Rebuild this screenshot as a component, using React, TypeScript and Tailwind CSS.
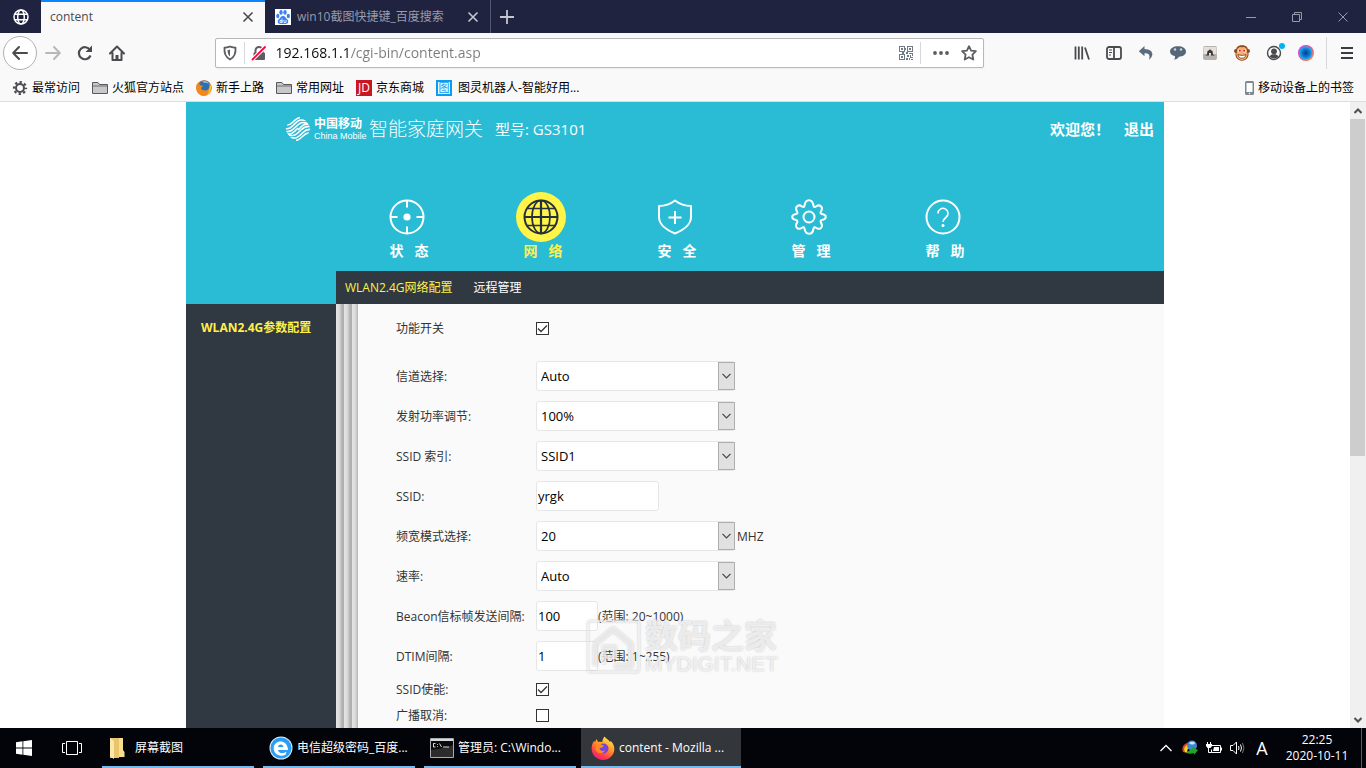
import type { ReactNode } from 'react';
import { useState } from 'react';

// Main sections of the gateway admin page
const mainNavigation = [
  { name: '状   态', icon: TargetIcon, active: false },
  { name: '网   络', icon: GlobeIcon, active: true },
  { name: '安   全', icon: ShieldIcon, active: false },
  { name: '管   理', icon: GearIcon, active: false },
  { name: '帮   助', icon: HelpIcon, active: false },
];

const bookmarks = [
  { name: '最常访问', icon: CogIcon },
  { name: '火狐官方站点', icon: FolderIcon },
  { name: '新手上路', icon: OldFirefoxIcon },
  { name: '常用网址', icon: FolderIcon },
  { name: '京东商城', icon: JdIcon },
  { name: '图灵机器人-智能好用...', icon: TuringIcon },
];

const extensions = [
  { name: '我的足迹', icon: LibraryIcon },
  { name: '侧栏', icon: SidebarIcon },
  { name: '撤销', icon: UndoIcon },
  { name: '聊天', icon: ChatIcon },
  { name: '图片', icon: PictureIcon },
  { name: '脚本', icon: MonkeyIcon },
  { name: '账户', icon: AccountIcon },
  { name: '扩展', icon: LensIcon },
];

const tasks = [
  { name: '屏幕截图', icon: ExplorerIcon, active: false },
  { name: '电信超级密码_百度...', icon: EdgeLikeIcon, active: false },
  { name: '管理员: C:\\Windo...', icon: ConsoleIcon, active: false },
  { name: 'content - Mozilla ...', icon: FirefoxIcon, active: true },
];

/* ---------- page icons ---------- */

function TargetIcon() {
  return (
    <svg viewBox="0 0 36 36" className="size-9" fill="none" stroke="currentColor" strokeWidth="2">
      <circle cx="18" cy="18" r="16.5" />
      <circle cx="18" cy="18" r="3.6" fill="currentColor" stroke="none" />
      <path d="M18 1.500v7M18 27.500v7M1.500 18h7M27.500 18h7" />
    </svg>
  );
}

function GlobeIcon() {
  return (
    <svg viewBox="0 0 36 36" className="size-9" fill="none" stroke="currentColor" strokeWidth="2">
      <circle cx="18" cy="18" r="16.500" />
      <ellipse cx="18" cy="18" rx="9" ry="16.500" strokeWidth="1.700" />
      <path d="M18 1.500v33M1.500 18h33" strokeWidth="2.200" />
      <path d="M4.500 9.500h27M4.500 26.500h27" strokeWidth="1.400" />
    </svg>
  );
}

function ShieldIcon() {
  return (
    <svg viewBox="0 0 36 36" className="size-9" fill="none" stroke="currentColor" strokeWidth="2" strokeLinejoin="round">
      <path d="M18 1.500C13.500 5 7.500 7 2 7v11c0 7 7 13 16 16.500C27 31 34 25 34 18V7C28.500 7 22.500 5 18 1.500Z" />
      <path d="M18 12v13M11.500 18.500h13" />
    </svg>
  );
}

function GearIcon() {
  return (
    <svg viewBox="0 0 36 36" className="size-9" fill="none" stroke="currentColor" strokeWidth="2" strokeLinejoin="round">
      <circle cx="18" cy="18" r="5.500" />
      <path d="M13.500 6.500C14 3.500 15.500 1.200 18 1.200s4 2.300 4.500 5.300c.3 1.600 1.200 2 2.500 1 2-1.500 3.700-1.300 4.900-.2s1.500 3 .2 5c-1 1.500-.6 2.500 1 2.800 2.200.5 3.700 1.400 3.700 3s-1.500 2.500-3.700 3c-1.600.3-2 1.300-1 2.800 1.300 2 1 3.900-.2 5s-2.900 1.300-4.900-.2c-1.300-1-2.200-.6-2.500 1-.5 3-2 5.100-4.500 5.100s-4-2.100-4.500-5.100c-.3-1.600-1.200-2-2.500-1-2 1.500-3.700 1.300-4.900.2s-1.500-3-.2-5c1-1.500.6-2.500-1-2.800-2.200-.5-3.700-1.400-3.700-3s1.500-2.500 3.700-3c1.600-.3 2-1.300 1-2.800-1.300-2-1-3.900.2-5s2.900-1.300 4.900.2c1.300 1 2.200.6 2.500-1Z" />
    </svg>
  );
}

function HelpIcon() {
  return (
    <svg viewBox="0 0 36 36" className="size-9" fill="none" stroke="currentColor" strokeWidth="2">
      <circle cx="18" cy="18" r="16.500" />
      <path d="M13 14.500a5 5 0 1 1 7.800 4C18.800 20 18 21 18 23" strokeWidth="1.600" />
      <circle cx="18" cy="26.500" r="1.500" fill="currentColor" stroke="none" />
    </svg>
  );
}

function ChinaMobileLogo() {
  return (
    <svg viewBox="0 0 26 26" className="size-[26px]" fill="none" stroke="#fff" strokeWidth="1.700">
      <clipPath id="cm-shape">
        <path d="M9.500 1.500Q13 0 16.500 1.500L21 5l3.500 5q1.500 3 0 6L21 21l-4.500 3.500q-3.500 1.500-7 0L5 21l-3.500-5Q0 13 1.500 10L5 5Z" />
      </clipPath>
      <g clipPath="url(#cm-shape)">
        <path d="M2 9c3 0 4-1 6-3s4-4 7-4.500" />
        <path d="M0 12.500c4 1 6-1 8.500-3.500S13 4 16 4s3 .5 5 .500" />
        <path d="M0 15.500c5 1 7.500-1.500 10-4S15 6.500 18 6.500s4 1 6 1" />
        <path d="M1.500 17.500c3 1.500 6 0 8.500-2.500l3-3" />
        <path d="M13 14l3-3c2.500-2.500 5.500-4 8.500-2.500" />
        <path d="M2 18.500c2 1 3.500 1 6 1s5.500-3 8-5.500 5-4.500 10-3.500" />
        <path d="M5 21.500c2 .5 3 .5 5 .5s5.500-3 8-5.500 4-3.500 8-3" />
        <path d="M11 24.500c3-.5 5-2.500 7-4.500s3-3 6-3" />
      </g>
    </svg>
  );
}

/* ---------- browser icons ---------- */

function NetIcon() {
  return (
    <svg viewBox="0 0 16 16" className="size-4" fill="none" stroke="#fff" strokeWidth="1.500">
      <circle cx="8" cy="8" r="7" />
      <ellipse cx="8" cy="8" rx="3.300" ry="7" />
      <path d="M2 5.200h12M2 10.800h12" />
    </svg>
  );
}

function BaiduIcon() {
  return (
    <svg viewBox="0 0 16 16" className="size-4">
      <path d="M0 0h16v16H0z" fill="#fff" />
      <g fill="#3b82f0">
        <ellipse cx="2.800" cy="7" rx="1.600" ry="2.200" />
        <ellipse cx="6" cy="3.400" rx="1.700" ry="2.300" />
        <ellipse cx="10" cy="3.400" rx="1.700" ry="2.300" />
        <ellipse cx="13.300" cy="7" rx="1.600" ry="2.200" />
        <path d="M8 6.800c-2 0-2.600 2.300-4.200 3.500-2 1.600-1 5 1.700 4.700h5c2.700.3 3.800-3 1.700-4.700C10.600 9.100 10 6.800 8 6.800Z" />
      </g>
      <path d="M5 11.500h2v2H5zM7 9.500v4M9 11v2.500h2V11" fill="none" stroke="#fff" strokeWidth=".8" />
    </svg>
  );
}

function CloseIcon() {
  return (
    <svg viewBox="0 0 12 12" className="size-3" fill="none" stroke="currentColor" strokeWidth="1.600">
      <path d="m1.500 1.500 9 9M10.500 1.500l-9 9" />
    </svg>
  );
}

function CogIcon() {
  return (
    <svg viewBox="0 0 16 16" className="size-4" fill="none" stroke="#4a4a4f">
      <circle cx="8" cy="8" r="4" strokeWidth="2" />
      <circle cx="8" cy="8" r="6" strokeWidth="2.200" strokeDasharray="2.300 2.412" strokeDashoffset="1.150" />
    </svg>
  );
}

function FolderIcon() {
  return (
    <svg viewBox="0 0 16 16" className="size-4" fill="#c8c8cc" stroke="#58585c">
      <path d="M.5 13.500v-11h5.500l1.500 2h8v9Z" />
      <path d="M.5 6h15" strokeWidth=".8" />
    </svg>
  );
}

function OldFirefoxIcon() {
  return (
    <svg viewBox="0 0 16 16" className="size-4">
      <circle cx="8" cy="8" r="7.800" fill="#e66a12" />
      <circle cx="8.500" cy="6" r="5.500" fill="#2b6fb5" />
      <path d="M6 1.500c3-1.500 6 0 7 2.500-2-1.500-4 0-7-2.500Z" fill="#79c2ee" />
      <path d="M.8 4 3 2.500 3.500 5 7 6 5 8l1 2 4 .5c1.500 0 3-1.500 4-5 3 4 0 10-6 10.300C2.500 15.800-1 10 .8 4Z" fill="#f08a1c" />
      <path d="M13.500 3.500c3 4 1.500 9.500-2.500 11.500 2-3 3-7 2.500-11.500Z" fill="#fcc52e" />
    </svg>
  );
}

function JdIcon() {
  return (
    <span className="flex size-4 items-center justify-center bg-[#c81623] font-['Open_Sans',sans-serif] text-xs leading-4 text-white">
      JD
    </span>
  );
}

function TuringIcon() {
  return (
    <span className="mr-0.5 flex size-4 items-center justify-center border-2 border-[#0d9cf0] bg-[#e8f6ff] text-[11px] leading-3 text-[#0d9cf0]">
      图
    </span>
  );
}

function LibraryIcon() {
  return (
    <svg viewBox="0 0 16 16" className="size-4" fill="none" stroke="#4a4a4f" strokeWidth="1.800">
      <path d="M1.500 1.500v13M4.800 1.500v13M8.200 1.500v13M11 2.500l4 12" />
    </svg>
  );
}

function SidebarIcon() {
  return (
    <svg viewBox="0 0 16 16" className="size-4" fill="none" stroke="#4a4a4f" strokeWidth="1.800">
      <rect x="1" y="2" width="14" height="12" rx="2" />
      <path d="M8 2v12" />
      <path d="M3 5h3M3 7.500h3M3 10h2" strokeWidth="1" />
    </svg>
  );
}

function UndoIcon() {
  return (
    <svg viewBox="0 0 16 16" className="size-4">
      <path d="M6.500 1 .8 6.300l5.700 5V8.200c4-.3 6 1.500 4.500 6.600 5.800-4.500 4-10.500-4.500-10.700Z" fill="#5b6c7f" />
    </svg>
  );
}

function ChatIcon() {
  return (
    <svg viewBox="0 0 16 16" className="size-4">
      <path d="M8 1.200c4.500 0 8 2 8 5.300s-3.300 5.200-7 5.200c-1 1.500-2.500 2.600-5 3 .8-1 1.200-2.200 1-3.500C2 10.500 0 9 0 6.500c0-3.300 3.500-5.300 8-5.300Z" fill="#566779" />
      <circle cx="5" cy="4.500" r="1.200" fill="#cdd6df" />
      <circle cx="11" cy="4.500" r="1.200" fill="#cdd6df" />
    </svg>
  );
}

function PictureIcon() {
  return (
    <svg viewBox="0 0 16 16" className="size-4">
      <rect x="1" y="1" width="14" height="14" rx="2" fill="#b9b1ab" />
      <path d="M1.500 2h13v7h-13z" fill="#e6e0da" />
      <path d="M3 10.500 5 9.500 5.500 6l2-1L8 3.500 8.500 5l2 1 .5 3.500 2 1Z" fill="#37363a" />
      <path d="M7 8h2l-.5 3h-1z" fill="#fff" />
    </svg>
  );
}

function MonkeyIcon() {
  return (
    <svg viewBox="0 0 16 16" className="size-4">
      <circle cx="2" cy="6" r="2" fill="#8c4a1b" />
      <circle cx="14" cy="6" r="2" fill="#8c4a1b" />
      <path d="M8 .3C3.500.3 1.500 3 2 7c-2 4 1.500 8.800 6 8.800S16 11 14 7C14.500 3 12.500.3 8 .3Z" fill="#8c4a1b" />
      <path d="M8 2.500C5 1 2.700 3.500 3 7c-2 3 1 8 5 8s7-5 5-8C13.300 3.500 11 1 8 2.500Z" fill="#f4ae72" />
      <circle cx="5.500" cy="5.700" r="1.700" fill="#fff" />
      <circle cx="10.500" cy="5.700" r="1.700" fill="#fff" />
      <circle cx="5.800" cy="5.700" r="1.100" fill="#d61f1f" />
      <circle cx="10.200" cy="5.700" r="1.100" fill="#d61f1f" />
      <path d="M4 9.500c2 1.200 6 1.200 8 0-.3 5-7.700 5-8 0Z" fill="#fff" stroke="#5d2b0c" strokeWidth=".7" />
    </svg>
  );
}

function AccountIcon() {
  return (
    <svg viewBox="0 0 24 24" className="size-6">
      <circle cx="12" cy="12" r="6.500" fill="none" stroke="#4a4a4f" strokeWidth="1.400" />
      <circle cx="12" cy="10.300" r="2.900" fill="#4a4a4f" />
      <path d="M7.500 15.500c1-1.700 2.500-2.200 4.500-2.200s3.500.5 4.500 2.200c-2 2.500-7 2.500-9 0Z" fill="#4a4a4f" />
      <circle cx="20" cy="5" r="3" fill="#00b3f4" />
    </svg>
  );
}

function LensIcon() {
  return (
    <svg viewBox="0 0 16 16" className="size-4">
      <defs>
        <linearGradient id="lens-ring" x1="0" y1="0" x2="1" y2="1">
          <stop offset=".2" stopColor="#d43bd0" />
          <stop offset=".6" stopColor="#f5577b" />
          <stop offset="1" stopColor="#ffa436" />
        </linearGradient>
        <radialGradient id="lens-core">
          <stop offset="0" stopColor="#063f86" />
          <stop offset=".6" stopColor="#0f7ad2" />
          <stop offset="1" stopColor="#27b5f5" />
        </radialGradient>
      </defs>
      <circle cx="8" cy="8" r="8" fill="url(#lens-ring)" />
      <circle cx="7.800" cy="8" r="6.700" fill="url(#lens-core)" />
    </svg>
  );
}

function QrIcon() {
  return (
    <svg viewBox="0 0 14 14" className="size-3.5" fill="#6f7a86">
      <path fillRule="evenodd" d="M0 0h6v6H0zM1 1v4h4V1zM8 0h6v6H8zM9 1v4h4V1zM0 8h6v6H0zM1 9v4h4V9z" />
      <path d="M2 2h2v2H2zM10 2h2v2h-2zM2 10h2v2H2zM6 2h1v2H6zM3 6h2v2H3zM7 6h2v2H7zM10 7h4v1h-4zM8 9h2v2H8zM11 9h1v2h2v1h-3zM7 12h2v2H7zM10 12h1v2h-1zM12 13h2v1h-2zM13 8h1v2h-1z" />
    </svg>
  );
}

/* ---------- taskbar icons ---------- */

function ExplorerIcon() {
  return (
    <svg viewBox="0 0 20 24" className="mr-[3px] h-6 w-5">
      <path d="M2 2h9v20H2z" fill="#e9c46a" />
      <path d="M11 2h4V14l1.500 2v5H11z" fill="#f7dd8f" />
      <path d="m2 2 4 3v18l-4-2.500Z" fill="#fbe7a6" />
    </svg>
  );
}

function EdgeLikeIcon() {
  return (
    <svg viewBox="0 0 24 24" className="size-6">
      <circle cx="12" cy="12" r="11.500" fill="#d8f0ff" />
      <circle cx="12" cy="12" r="10.500" fill="#2a9df4" />
      <path d="M19 14H9c.3 3.500 5.500 4 8.500 1.700l-1 3C10.500 21.500 4.500 18 4.700 12c.2-8.500 14-9.500 14.300 2Zm-4.500-3c-.2-3.500-5.300-3.500-5.500 0Z" fill="#fff" fillRule="evenodd" />
    </svg>
  );
}

function ConsoleIcon() {
  return (
    <svg viewBox="0 0 24 20" className="h-5 w-6">
      <path d="M.5.5h23v19H.5z" fill="#0b0b0b" stroke="#a9adb0" />
      <path d="M1 12C8 11 16 10 23 7v12H1Z" fill="#2c2c2c" />
      <path d="M1 1h22v2H1z" fill="#d5dade" />
      <path d="M5.500 5.500h-2V9h2M7.500 6v.8M7.500 8v.8M9.500 5.500l2 3.500M13 9h6" fill="none" stroke="#eee" strokeWidth=".9" />
    </svg>
  );
}

function FirefoxIcon() {
  return (
    <svg viewBox="0 0 24 24" className="size-6">
      <defs>
        <linearGradient id="fox" x1=".8" y1="0" x2=".25" y2="1">
          <stop offset="0" stopColor="#fff04a" />
          <stop offset=".45" stopColor="#ff9224" />
          <stop offset=".75" stopColor="#ff3f4f" />
          <stop offset="1" stopColor="#e8187e" />
        </linearGradient>
      </defs>
      <path d="M13.500.5c1 2 4 3 5.500 5.500l.6-1c3 2.500 4 6 3.700 9-.6 5.500-5.300 10-11.300 10C5.700 24 .6 19 .6 12.800c0-3.500 1.200-6.300 2.700-8.300l.5 2L5.500 3l1.700 3c1.600-.4 3-.2 4 .2.2-2 1-4 2.300-5.700Z" fill="url(#fox)" />
      <circle cx="12.500" cy="12.500" r="5" fill="#7542e5" />
      <path d="M5 8.500c2 0 3.500-.8 5.500 0L13 10l-2 1.500-2.500.8c.5 2.500 3 3.500 5.500 2-1.500 4-8 4-9.500-.5Z" fill="#ff8a1c" />
    </svg>
  );
}

function ToolbarButton({ label, children }: { label: string; children: ReactNode }) {
  return (
    <button aria-label={label} className="flex size-8 shrink-0 items-center justify-center">
      {children}
    </button>
  );
}

function TabStrip() {
  return (
    <div className="flex h-[33px] bg-[#202340]">
      <button aria-label="固定标签页" className="flex w-[41px] items-center justify-center">
        <NetIcon />
      </button>
      <div className="flex w-56 items-center justify-between border-t-2 border-[#0a84ff] bg-[#f9f9fa] pr-[11px] pb-px pl-[9px] text-[#4a4a4f]">
        <span>content</span>
        <button aria-label="关闭标签页"><CloseIcon /></button>
      </div>
      <div className="flex w-[226px] items-center gap-1.5 border-r border-[#55586f] pr-[11px] pl-[10px] text-[#9a9bab]">
        <BaiduIcon />
        <span className="flex-1 whitespace-nowrap">win10截图快捷键_百度搜索</span>
        <button aria-label="关闭标签页" className="text-[#c5c6d0]"><CloseIcon /></button>
      </div>
      <button aria-label="新建标签页" className="flex w-8 items-center justify-center">
        <svg viewBox="0 0 14 14" className="size-3.5" stroke="#c5c6d0" strokeWidth="1.800">
          <path d="M7 0v14M0 7h14" />
        </svg>
      </button>
      <div className="ml-auto flex">
        {['M0 5.500h10', 'M.5 2.500h7v7h-7zM2.500 2.500v-2h7v7h-2', 'M.5.500l9 9M9.500.500l-9 9'].map((d, index) => (
          <button key={d} aria-label={['最小化', '还原', '关闭'][index]} className="flex w-[46px] items-center justify-center">
            <svg viewBox="0 0 10 10" className="size-2.5" fill="none" stroke="#9899a8">
              <path d={d} />
            </svg>
          </button>
        ))}
      </div>
    </div>
  );
}

function AddressBar() {
  const [url, setUrl] = useState('192.168.1.1/cgi-bin/content.asp');

  return (
    <div className="flex h-10 items-center px-[3px]">
      <button aria-label="后退" className="flex size-[34px] shrink-0 items-center justify-center rounded-full border border-[#b1b1b3] bg-white">
        <svg viewBox="0 0 16 16" className="size-4" fill="none" stroke="#4a4a4f" strokeWidth="2" strokeLinecap="round" strokeLinejoin="round">
          <path d="M15 8H1.500M7 2 1.200 8 7 14" />
        </svg>
      </button>
      <ToolbarButton label="前进">
        <svg viewBox="0 0 16 16" className="size-4" fill="none" stroke="#b8b8ba" strokeWidth="2" strokeLinecap="round" strokeLinejoin="round">
          <path d="M1 8h13.500M9 2l5.800 6L9 14" />
        </svg>
      </ToolbarButton>
      <ToolbarButton label="刷新">
        <svg viewBox="0 0 16 16" className="size-4" fill="none" stroke="#4a4a4f" strokeWidth="2.200">
          <path d="M13 5A6 6 0 1 0 13.500 10.500" />
          <path d="M15 .5V7H8.500Z" fill="#4a4a4f" stroke="none" />
        </svg>
      </ToolbarButton>
      <ToolbarButton label="主页">
        <svg viewBox="0 0 16 16" className="size-4" fill="none" stroke="#4a4a4f" strokeWidth="2" strokeLinejoin="round" strokeLinecap="round">
          <path d="M1 8.500 8 1.500l7 7M3.500 8v7h9V8" />
          <path d="M8 10v5" strokeWidth="3" strokeLinecap="butt" />
        </svg>
      </ToolbarButton>

      <div className="w-[6%]" />
      <div className="flex h-[30px] flex-1 items-center rounded-xs border border-[#b8b8ba] bg-white shadow-xs">
        <button aria-label="跟踪保护" className="flex w-7 items-center justify-center">
          <svg viewBox="0 0 16 16" className="size-4" fill="none" stroke="#5c5c61" strokeWidth="1.800" strokeLinejoin="round">
            <path d="M8 1.500c2 1 4 1 5.500 1.200C14 8.500 12 12.500 8 14.500 4 12.500 2 8.500 2.500 2.700 4 2.500 6 2.500 8 1.500Z" />
            <path d="M8 4.500c-.8.500-1.800.6-2.500.7.200 3 1 5 2.500 6.300Z" fill="#5c5c61" stroke="none" />
          </svg>
        </button>
        <div className="h-[22px] border-l border-[#d7d7db]" />
        <button aria-label="连接不安全" className="flex w-7 items-center justify-center">
          <svg viewBox="0 0 16 16" className="size-4">
            <path d="M4.500 8V5.500a3.500 3.500 0 0 1 7 0V8" fill="none" stroke="#5c5c61" strokeWidth="2" />
            <rect x="2.500" y="7.500" width="11.500" height="7.500" rx="1" fill="#5c5c61" />
            <path d="M1 15 14.500 1.500" stroke="#fff" strokeWidth="4" />
            <path d="M1 15 14.500 1.500" stroke="#ff0039" strokeWidth="1.800" />
          </svg>
        </button>
        {/* host part of the address is darker than the path */}
        <input
          aria-label="地址栏"
          value={url}
          onChange={(event) => setUrl(event.target.value)}
          className="min-w-0 flex-1 bg-[linear-gradient(90deg,#0c0c0d_77px,#7b7b7e_77px)] bg-clip-text pl-[3px] text-sm leading-6 text-transparent outline-none"
        />
        <button aria-label="二维码" className="flex w-7 items-center justify-center"><QrIcon /></button>
        <div className="h-[22px] border-l border-[#d7d7db]" />
        <button aria-label="页面操作" className="ml-1 flex size-8 items-center justify-center">
          <svg viewBox="0 0 16 4" className="h-1 w-4" fill="#5c5c61">
            <circle cx="2" cy="2" r="1.900" />
            <circle cx="8" cy="2" r="1.900" />
            <circle cx="14" cy="2" r="1.900" />
          </svg>
        </button>
        <button aria-label="添加书签" className="mr-0.5 flex w-6 items-center justify-center">
          <svg viewBox="0 0 16 16" className="size-4" fill="none" stroke="#5c5c61" strokeWidth="1.800" strokeLinejoin="round">
            <path d="m8 1.200 2.100 4.400 4.800.6-3.500 3.400.9 4.900L8 12.200l-4.300 2.300.9-4.900L1.100 6.200l4.800-.6Z" />
          </svg>
        </button>
      </div>
      <div className="w-[6%]" />

      {extensions.map((item) => (
        <ToolbarButton key={item.name} label={item.name}>
          <item.icon />
        </ToolbarButton>
      ))}
      <div className="mr-1 ml-1 h-8 border-l border-[#d7d7db]" />
      <ToolbarButton label="菜单">
        <svg viewBox="0 0 12 12" className="size-3" stroke="#3c3c40" strokeWidth="2">
          <path d="M0 1h12M0 6h12M0 11h12" />
        </svg>
      </ToolbarButton>
    </div>
  );
}

function BookmarksBar() {
  return (
    <div className="flex h-7 items-center gap-3 px-3 pt-0.5 whitespace-nowrap">
      {bookmarks.map((item) => (
        <a key={item.name} href="#" className="flex items-center gap-1">
          <item.icon />
          {item.name}
        </a>
      ))}
      <a href="#" className="ml-auto flex items-center gap-1">
        <svg viewBox="0 0 9 14" className="h-3.5 w-[9px]">
          <rect width="9" height="14" rx="1.500" fill="#7d8790" />
          <path d="M1.500 2h6v9h-6z" fill="#fff" />
          <circle cx="4.500" cy="12.500" r=".8" fill="#fff" />
        </svg>
        移动设备上的书签
      </a>
    </div>
  );
}

function Field({ id, label, tall = true, children }: { id: string; label: string; tall?: boolean; children: ReactNode }) {
  return (
    <div className={`flex items-center ${tall ? 'h-10' : 'h-[26px]'}`}>
      <label htmlFor={id} className="w-[140px] shrink-0 pt-0.5 whitespace-nowrap">{label}</label>
      {children}
    </div>
  );
}

function CheckBox({ id, checked = false }: { id: string; checked?: boolean }) {
  return (
    <span className="relative flex">
      <input id={id} type="checkbox" defaultChecked={checked} className="peer size-[13px] appearance-none border border-[#333] bg-white" />
      <svg viewBox="0 0 13 13" className="pointer-events-none absolute inset-0 hidden size-[13px] peer-checked:block" fill="none" stroke="#333" strokeWidth="1.300">
        <path d="m2 6.500 3 3 6-6" />
      </svg>
    </span>
  );
}

function SelectBox({ id, options }: { id: string; options: string[] }) {
  return (
    <span className="relative flex">
      <select id={id} className="h-[30px] w-[199px] appearance-none rounded-[3px] border border-[#e6e6e6] bg-white pr-5 pl-1 text-[13px] text-black">
        {options.map((option) => (
          <option key={option}>{option}</option>
        ))}
      </select>
      <span className="pointer-events-none absolute inset-y-px right-0 flex w-[17px] items-center justify-center border border-[#adadad] bg-[#e1e1e1]">
        <svg viewBox="0 0 9 6" className="h-1.5 w-[9px]" fill="none" stroke="#444" strokeWidth="1.200">
          <path d="m.5.800 4 4 4-4" />
        </svg>
      </span>
    </span>
  );
}

function TextBox({ id, value, wide = false }: { id: string; value: string; wide?: boolean }) {
  return (
    <input
      id={id}
      defaultValue={value}
      className={`h-[30px] rounded-[3px] border border-[#e6e6e6] bg-white px-px text-[13px] text-black ${wide ? 'w-[123px]' : 'w-[62px]'}`}
    />
  );
}

function Watermark() {
  return (
    <div className="pointer-events-none absolute top-[314px] left-[227px] flex items-center gap-1 whitespace-nowrap text-white/70">
      <svg viewBox="0 0 56 56" className="size-14 drop-shadow-[0_0_1px_#aaa]" fill="none" stroke="#fafafa" strokeOpacity=".6" strokeLinejoin="round">
        <rect x="3" y="3" width="51" height="51" rx="3" strokeWidth="2" />
        <path d="M10 48V26L28 11l18 15v22H29" strokeWidth="5" />
        <path d="M19 46V29h11v10H20" strokeWidth="4" />
      </svg>
      <div className="[text-shadow:0_0_2px_#bbb]">
        <div className="text-[33px] leading-9 font-bold">数码之家</div>
        <div className="font-['Liberation_Sans',sans-serif] text-[21px] leading-5">MYDIGIT.NET</div>
      </div>
    </div>
  );
}

function GatewayPage() {
  return (
    <div className="mx-auto flex min-h-full w-full max-w-[978px] flex-col bg-[#fafafa]">
      <header className="bg-[#2bbcd5] text-white">
        <div className="flex h-[54px] items-center pr-[10px] pl-[99px]">
          <ChinaMobileLogo />
          <div className="ml-[3px] w-[50px] whitespace-nowrap">
            <div className="text-xs leading-[14px] font-bold">中国移动</div>
            <div className="font-['Liberation_Sans',sans-serif] text-[9px] leading-[10px]">China Mobile</div>
          </div>
          <h1 className="ml-[5px] text-[19px] leading-6 font-light">智能家庭网关</h1>
          <span className="ml-3 text-[15px] leading-6">型号: GS3101</span>
          <div className="ml-auto flex gap-[14px] text-[15px] leading-6 font-bold">
            <span>欢迎您！</span>
            <a href="#">退出</a>
          </div>
        </div>
        <nav className="flex pt-9 pl-[154px]">
          {mainNavigation.map((item) => (
            <a key={item.name} href="#" className={`flex w-[134px] flex-col items-center ${item.active ? 'text-[#fff04a]' : 'text-white'}`}>
              <span className={`flex size-[50px] items-center justify-center rounded-full ${item.active ? 'bg-[#fff447] text-[#26303c]' : ''}`}>
                <item.icon />
              </span>
              <span className="pl-1 text-sm leading-[18px] font-bold whitespace-pre">{item.name}</span>
            </a>
          ))}
        </nav>
        <div className="flex h-11 items-end pl-[150px]">
          <nav className="flex h-[33px] flex-1 items-center gap-[21px] bg-[#303841] pl-[9px]">
            <a href="#" className="text-[#fff04a]">WLAN2.4G网络配置</a>
            <a href="#">远程管理</a>
          </nav>
        </div>
      </header>

      <div className="flex flex-1">
        <aside className="w-[150px] shrink-0 bg-[#303841] pt-[14px] pl-[15px]">
          <a href="#" className="leading-5 font-bold text-[#fff04a]">WLAN2.4G参数配置</a>
        </aside>
        <div className="w-[22px] shrink-0 bg-[repeating-linear-gradient(90deg,#e4e4e4_0,#dcdcdc_3px,#a8a8a8_7px,#b8b8b8_8px)]" />
        <form className="relative flex-1 pt-1 pl-[38px] text-[#333]">
          <div className="pb-2">
            <Field id="enable" label="功能开关"><CheckBox id="enable" checked /></Field>
          </div>
          <Field id="channel" label="信道选择:"><SelectBox id="channel" options={['Auto']} /></Field>
          <Field id="power" label="发射功率调节:"><SelectBox id="power" options={['100%']} /></Field>
          <Field id="ssid-index" label="SSID 索引:"><SelectBox id="ssid-index" options={['SSID1']} /></Field>
          <Field id="ssid" label="SSID:"><TextBox id="ssid" value="yrgk" wide /></Field>
          <Field id="bandwidth" label="频宽模式选择:">
            <SelectBox id="bandwidth" options={['20']} />
            <span className="pt-0.5 pl-0.5">MHZ</span>
          </Field>
          <Field id="rate" label="速率:"><SelectBox id="rate" options={['Auto']} /></Field>
          <Field id="beacon" label="Beacon信标帧发送间隔:">
            <TextBox id="beacon" value="100" />
            <span className="pt-0.5">(范围: 20~1000)</span>
          </Field>
          <Field id="dtim" label="DTIM间隔:">
            <TextBox id="dtim" value="1" />
            <span className="pt-0.5">(范围: 1~255)</span>
          </Field>
          <Field id="ssid-enable" label="SSID使能:" tall={false}><CheckBox id="ssid-enable" checked /></Field>
          <Field id="broadcast" label="广播取消:" tall={false}><CheckBox id="broadcast" /></Field>
          <Watermark />
        </form>
      </div>
    </div>
  );
}

function ScrollBar() {
  return (
    <div className="flex w-4 shrink-0 flex-col bg-[#f0f0f0]">
      <button aria-label="向上滚动" className="flex h-[17px] items-center justify-center">
        <svg viewBox="0 0 8 6" className="h-1.5 w-2" fill="none" stroke="#505050" strokeWidth="2"><path d="m.5 5L4 1.500 7.500 5" /></svg>
      </button>
      <div className="flex-1">
        <div className="mr-px h-[57%] bg-[#cdcdcd]" />
      </div>
      <button aria-label="向下滚动" className="flex h-[17px] items-center justify-center">
        <svg viewBox="0 0 8 6" className="h-1.5 w-2" fill="none" stroke="#505050" strokeWidth="2"><path d="m.5 1L4 4.500 7.500 1" /></svg>
      </button>
    </div>
  );
}

function Taskbar() {
  return (
    <footer className="flex h-10 shrink-0 bg-[#020409] text-white">
      <button aria-label="开始" className="flex w-12 items-center justify-center">
        <svg viewBox="0 0 16 16" className="size-4" fill="#fff">
          <path d="M0 2.200 6.500 1.300v6.200H0zM7.300 1.200 16 0v7.500H7.300zM0 8.400h6.500v6.300L0 13.800zM7.300 8.400H16V16l-8.700-1.200z" />
        </svg>
      </button>
      <button aria-label="任务视图" className="flex w-12 items-center justify-center">
        <svg viewBox="0 0 20 14" className="h-3.5 w-5" fill="none" stroke="#fff">
          <path d="M4.500.5h11v13h-11zM3 2.500H.5v9H3M17 2.500h2.500v9H17" />
        </svg>
      </button>
      <div className="ml-0.5 flex gap-px">
        {tasks.map((task) => (
          <button key={task.name} className={`flex w-40 flex-col ${task.active ? 'bg-[#33363b]' : 'px-1'}`}>
            <span className={`flex w-full flex-1 items-center gap-1 pt-0.5 whitespace-nowrap ${task.active ? 'pl-[10px]' : 'pl-1.5'}`}>
              <task.icon />
              {task.name}
            </span>
            <span className="h-0.5 w-full bg-[#76b9ed]" />
          </button>
        ))}
      </div>
      <div className="ml-auto flex items-center">
        <button aria-label="显示隐藏的图标" className="flex w-6 justify-center">
          <svg viewBox="0 0 12 8" className="h-2 w-3" fill="none" stroke="#fff" strokeWidth="1.300"><path d="m.5 7L6 1.500 11.500 7" /></svg>
        </button>
        <button aria-label="下载管理" className="flex w-6 justify-center">
          <svg viewBox="0 0 16 16" className="size-4">
            <path d="M8 2C2 3-1 7 1 12l4 1c-2-5 1-6 5-7Z" fill="#e23c1e" />
            <path d="M8 4C3 5 1 8 3 12l3 1c-2-4 1-5 4-6Z" fill="#f5d327" />
            <circle cx="10" cy="5.500" r="5" fill="#3f86d6" />
            <path d="M7 3c2-2 5-1.500 6 0-1 2-4 2-6 0Z" fill="#c9e5fa" />
            <path d="M4 13c2-1 3-3 6-4V7l6 3-4 5v-2c-3 1-5 1-8 0Z" fill="#21a526" />
          </svg>
        </button>
        <button aria-label="电源" className="flex w-6 justify-center">
          <svg viewBox="0 0 16 12" className="h-3 w-4" fill="none" stroke="#fff">
            <path d="M6 3.500h8.500v7h-9v-3M15.500 5.500v3M2.500 6v4.500h3M1.500 0v2M4.500 0v2" />
            <path d="M0 2h6v2L4.500 6h-3L0 4z" fill="#fff" stroke="none" />
            <path d="M8 5h5v4H7z" fill="#fff" stroke="none" />
          </svg>
        </button>
        <button aria-label="音量" className="flex w-6 justify-center">
          <svg viewBox="0 0 16 14" className="h-3.5 w-4" fill="none" stroke="#fff">
            <path d="M.5 4.500H3L6.500 1v12L3 9.500H.5Z" />
            <path d="M8.500 5q1 2 0 4M10.500 3.500q2 3.500 0 7" />
            <path d="M12.500 2q3 5 0 10" stroke="#777" />
          </svg>
        </button>
        <button aria-label="输入法" className="flex w-6 justify-center text-lg leading-6">A</button>
        <time className="w-[86px] text-center leading-4">
          <span className="block">22:25</span>
          <span className="block">2020-10-11</span>
        </time>
        <button aria-label="显示桌面" className="ml-px h-10 w-[5px] border-l border-[#5a5c60]" />
      </div>
    </footer>
  );
}

export default function App() {
  return (
    <div className="flex h-screen flex-col overflow-hidden bg-white font-['Open_Sans','Noto_Sans_CJK_SC',sans-serif] text-xs leading-4 text-black">
      <div className="shrink-0 border-b border-[#dcdcdc] bg-[#f9f9fa]">
        <TabStrip />
        <AddressBar />
        <BookmarksBar />
      </div>
      <div className="flex min-h-0 flex-1">
        <main className="flex-1 overflow-hidden">
          <GatewayPage />
        </main>
        <ScrollBar />
      </div>
      <Taskbar />
    </div>
  );
}
